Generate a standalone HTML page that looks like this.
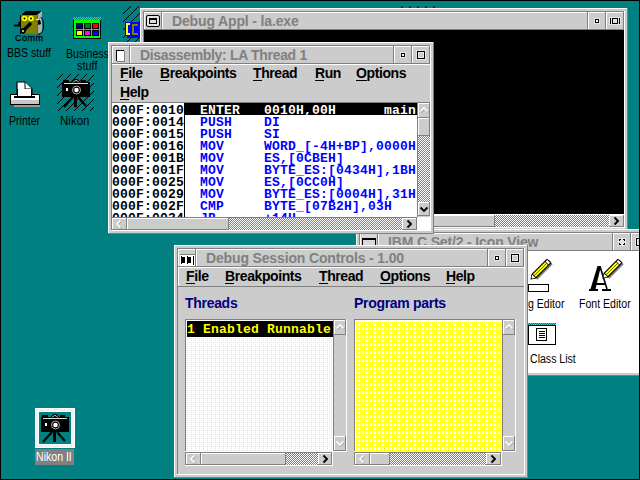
<!DOCTYPE html><html><head><meta charset="utf-8"><style>
html,body{margin:0;padding:0;width:640px;height:480px;overflow:hidden;background:#008080}
#s>div,#s>svg{position:absolute}
#s div div{position:absolute}
.t{white-space:pre;line-height:20px;height:20px}
svg{shape-rendering:crispEdges;display:block;overflow:hidden}
</style></head><body><div id="s" style="position:relative;width:640px;height:480px;overflow:hidden">
<svg width="0" height="0" style="position:absolute"><defs>
<pattern id="chk" width="2" height="2" patternUnits="userSpaceOnUse"><rect width="2" height="2" fill="#fff"/><rect x="1" y="0" width="1" height="1" fill="#808080"/><rect x="0" y="1" width="1" height="1" fill="#808080"/></pattern>
<pattern id="chkT" width="2" height="2" patternUnits="userSpaceOnUse"><rect width="2" height="2" fill="#008080"/><rect x="1" y="0" width="1" height="1" fill="#a0a0a0"/><rect x="0" y="1" width="1" height="1" fill="#a0a0a0"/></pattern>
<pattern id="chkY" width="2" height="2" patternUnits="userSpaceOnUse"><rect width="2" height="2" fill="#fff"/><rect x="1" y="0" width="1" height="1" fill="#ffff00"/><rect x="0" y="1" width="1" height="1" fill="#ffff00"/></pattern>
<pattern id="hat" width="8" height="8" patternUnits="userSpaceOnUse"><rect x="0" y="0" width="1" height="1" fill="#000"/><rect x="7" y="1" width="1" height="1" fill="#000"/><rect x="6" y="2" width="1" height="1" fill="#000"/><rect x="5" y="3" width="1" height="1" fill="#000"/><rect x="4" y="4" width="1" height="1" fill="#000"/><rect x="3" y="5" width="1" height="1" fill="#000"/><rect x="2" y="6" width="1" height="1" fill="#000"/><rect x="1" y="7" width="1" height="1" fill="#000"/></pattern>
<pattern id="ydith" width="8" height="8" patternUnits="userSpaceOnUse">
<rect x="0" y="0" width="1" height="1" fill="#ff0"/><rect x="4" y="0" width="1" height="1" fill="#ff0"/>
<rect x="0" y="2" width="1" height="1" fill="#ff0"/><rect x="2" y="2" width="1" height="1" fill="#ff0"/><rect x="4" y="2" width="1" height="1" fill="#ff0"/><rect x="6" y="2" width="1" height="1" fill="#ff0"/>
<rect x="0" y="4" width="1" height="1" fill="#ff0"/><rect x="2" y="4" width="1" height="1" fill="#ff0"/><rect x="4" y="4" width="1" height="1" fill="#ff0"/>
<rect x="0" y="6" width="1" height="1" fill="#ff0"/><rect x="2" y="6" width="1" height="1" fill="#ff0"/><rect x="4" y="6" width="1" height="1" fill="#ff0"/><rect x="6" y="6" width="1" height="1" fill="#ff0"/>
</pattern>
<pattern id="ydith2" patternTransform="translate(7,0)" width="8" height="8" patternUnits="userSpaceOnUse">
<rect x="0" y="0" width="1" height="1" fill="#ff0"/><rect x="4" y="0" width="1" height="1" fill="#ff0"/>
<rect x="0" y="2" width="1" height="1" fill="#ff0"/><rect x="2" y="2" width="1" height="1" fill="#ff0"/><rect x="4" y="2" width="1" height="1" fill="#ff0"/><rect x="6" y="2" width="1" height="1" fill="#ff0"/>
<rect x="0" y="4" width="1" height="1" fill="#ff0"/><rect x="2" y="4" width="1" height="1" fill="#ff0"/><rect x="4" y="4" width="1" height="1" fill="#ff0"/>
<rect x="0" y="6" width="1" height="1" fill="#ff0"/><rect x="2" y="6" width="1" height="1" fill="#ff0"/><rect x="4" y="6" width="1" height="1" fill="#ff0"/><rect x="6" y="6" width="1" height="1" fill="#ff0"/>
</pattern></defs></svg>
<div style="left:0;top:0;width:640px;height:480px;background:#008080"></div>
<svg style="left:10px;top:8px;" width="40" height="30" viewBox="10 8 40 30"><path d="M21 15 L26 11 L42 11 L37 15 Z" fill="#000"/><rect x="21" y="15" width="16" height="19" fill="#808000"/><rect x="20" y="15" width="1" height="19" fill="#000"/><path d="M37 15 L42 11 L42 32 L37 34 Z" fill="#b0b0b0" shape-rendering="auto"/><path d="M37 14.5 L37 34.5" stroke="#606060" stroke-width="1"/><circle cx="24.5" cy="18.5" r="2.8" fill="#ff0" shape-rendering="auto"/><circle cx="24.5" cy="18.5" r="1" fill="#000" shape-rendering="auto"/><circle cx="31" cy="18.5" r="2.8" fill="#ff0" shape-rendering="auto"/><circle cx="31" cy="18.5" r="1" fill="#000" shape-rendering="auto"/><rect x="36" y="19" width="5" height="1" fill="#ff0"/><path d="M23 31 L30 24" stroke="#000" stroke-width="3.6" stroke-linecap="round" shape-rendering="auto"/><circle cx="23" cy="31" r="2.8" fill="#000" shape-rendering="auto"/><rect x="22" y="30" width="2" height="2" fill="#b0b0b0"/><path d="M14 25.5 L19 25.5 L19.5 22.5 L21 22.5" fill="none" stroke="#000" stroke-width="1.8" shape-rendering="auto"/><path d="M38 21 L40 19 L41 24 L38 25 Z" fill="#000" shape-rendering="auto"/><path d="M41 17 Q44 20 43.5 27 Q43 34 38 34.5" fill="none" stroke="#000" stroke-width="1" shape-rendering="auto"/></svg>
<div class="t" style="left:15px;top:28px;font:9px 'Liberation Sans';line-height:20px;color:#000000;letter-spacing:0.5px;-webkit-text-stroke:0.25px #000">Comm</div>
<div class="t" style="left:7px;top:43px;font:12px 'Liberation Sans';line-height:20px;color:#000000;transform:scaleX(0.88);transform-origin:0 0">BBS stuff</div>
<svg style="left:70px;top:14px;" width="34" height="28" viewBox="70 14 34 28"><rect x="73" y="17" width="28" height="3" fill="url(#chkT)"/><rect x="73" y="20" width="28" height="19" fill="#000"/><rect x="74" y="20" width="26" height="18" fill="#00ff00"/><rect x="76" y="23" width="7" height="6" fill="#000"/><rect x="77" y="24" width="5" height="4" fill="#000080"/><rect x="84" y="23" width="7" height="6" fill="#000"/><rect x="85" y="24" width="5" height="4" fill="#008000"/><rect x="92" y="23" width="7" height="6" fill="#000"/><rect x="93" y="24" width="5" height="4" fill="#ff0000"/><rect x="76" y="30" width="7" height="6" fill="#000"/><rect x="77" y="31" width="5" height="4" fill="#ffff00"/><rect x="84" y="30" width="7" height="6" fill="#000"/><rect x="85" y="31" width="5" height="4" fill="#ff00ff"/><rect x="92" y="30" width="7" height="6" fill="#000"/><rect x="93" y="31" width="5" height="4" fill="#0000ff"/></svg>
<div class="t" style="left:66px;top:44px;font:12px 'Liberation Sans';line-height:20px;color:#000000;transform:scaleX(0.88);transform-origin:0 0">Business</div>
<div class="t" style="left:77px;top:56px;font:12px 'Liberation Sans';line-height:20px;color:#000000;transform:scaleX(0.91);transform-origin:0 0">stuff</div>
<svg style="left:118px;top:2px;" width="24" height="42" viewBox="118 2 24 42"><rect x="123" y="6" width="19" height="36" fill="url(#hat)"/><rect x="125" y="22" width="16" height="16" fill="#0000ff"/><rect x="125" y="36" width="2" height="2" fill="#008080"/><path d="M130 24 L127 24 L127 34 L130 34" fill="none" stroke="#ff0" stroke-width="2"/><path d="M138 25 L133 25 L133 34 L138 34" fill="none" stroke="#808000" stroke-width="2"/><rect x="139" y="27" width="1" height="1" fill="#f00"/><rect x="139" y="31" width="1" height="1" fill="#f00"/></svg>
<svg style="left:399px;top:6px;" width="37" height="2" viewBox="399 6 37 2"><rect x="399" y="6" width="37" height="2" fill="url(#hat)"/></svg>
<svg style="left:6px;top:78px;" width="40" height="32" viewBox="6 78 40 32"><path d="M17 82 L25 82 L32 89 L32 97 L17 97 Z" fill="#fff" stroke="#000" stroke-width="1.2" shape-rendering="auto"/><path d="M25 82 L25 89 L32 89" fill="#fff" stroke="#000" stroke-width="1" shape-rendering="auto"/><rect x="14" y="104" width="26" height="3" fill="#a09898"/><rect x="10" y="94" width="30" height="11" fill="#000"/><rect x="11" y="95" width="28" height="9" fill="#fff"/><rect x="11" y="100" width="28" height="4" fill="#c8c8c8"/><rect x="14" y="96" width="21" height="2" fill="#000"/><rect x="17" y="89" width="15" height="7" fill="#fff"/><rect x="17" y="89" width="1" height="7" fill="#000"/><rect x="31" y="89" width="1" height="7" fill="#000"/></svg>
<div class="t" style="left:9px;top:111px;font:12px 'Liberation Sans';line-height:20px;color:#000000;transform:scaleX(0.88);transform-origin:0 0">Printer</div>
<svg style="left:54px;top:70px;" width="44" height="44" viewBox="54 70 44 44"><rect x="57" y="74" width="37" height="37" fill="url(#hat)"/><rect x="62" y="82" width="28" height="15" fill="#000"/><rect x="63" y="80" width="6" height="2" fill="#000"/><rect x="81" y="80" width="5" height="2" fill="#000"/><path d="M72 82 L74 79 L78 79 L80 82 Z" fill="#000"/><path d="M73 82.5 Q76 78.5 79 82.5" fill="none" stroke="#fff" stroke-width="0.8" shape-rendering="auto"/><rect x="64" y="83" width="24" height="1" fill="#ddd"/><rect x="66" y="88" width="2" height="3" fill="#fff"/><circle cx="76.5" cy="90" r="4" fill="#000" stroke="#aaa" stroke-width="1" shape-rendering="auto"/><circle cx="76.5" cy="90" r="2.3" fill="#fff" shape-rendering="auto"/><rect x="74" y="97" width="3" height="10" fill="#000"/><path d="M73 97 L64 107" stroke="#000" stroke-width="2.2" shape-rendering="auto"/><path d="M78 97 L86 106" stroke="#000" stroke-width="2.2" shape-rendering="auto"/></svg>
<div class="t" style="left:60px;top:111px;font:12px 'Liberation Sans';line-height:20px;color:#000000;transform:scaleX(0.96);transform-origin:0 0">Nikon</div>
<svg style="left:34px;top:404px;" width="44" height="46" viewBox="34 404 44 46"><rect x="35" y="408" width="40" height="40" fill="#fff"/><rect x="36" y="409" width="38" height="38" fill="url(#chkY)"/><rect x="38" y="411" width="34" height="34" fill="#fff"/><rect x="39" y="412" width="32" height="32" fill="#008080"/><rect x="41" y="417" width="28" height="15" fill="#000"/><rect x="42" y="415" width="6" height="2" fill="#000"/><rect x="60" y="415" width="5" height="2" fill="#000"/><path d="M51 417 L53 414 L57 414 L59 417 Z" fill="#000"/><path d="M52 417.5 Q55 413.5 58 417.5" fill="none" stroke="#fff" stroke-width="0.8" shape-rendering="auto"/><rect x="43" y="418" width="24" height="1" fill="#ddd"/><rect x="45" y="423" width="2" height="3" fill="#fff"/><circle cx="55.5" cy="425" r="4" fill="#000" stroke="#aaa" stroke-width="1" shape-rendering="auto"/><circle cx="55.5" cy="425" r="2.3" fill="#fff" shape-rendering="auto"/><rect x="53" y="432" width="3" height="10" fill="#000"/><path d="M52 432 L43 442" stroke="#000" stroke-width="2.2" shape-rendering="auto"/><path d="M57 432 L65 441" stroke="#000" stroke-width="2.2" shape-rendering="auto"/></svg>
<div style="left:35px;top:449px;width:39px;height:16px;background:#808080;"></div>
<div class="t" style="left:36px;top:447px;font:12px 'Liberation Sans';line-height:20px;color:#ffffff;transform:scaleX(0.88);transform-origin:0 0">Nikon II</div>
<div style="left:140px;top:8px;width:488px;height:223px;background:#cccccc;"></div>
<div style="left:140px;top:8px;width:488px;height:1px;background:#ffffff;"></div>
<div style="left:140px;top:8px;width:1px;height:223px;background:#ffffff;"></div>
<div style="left:140px;top:230px;width:488px;height:1px;background:#808080;"></div>
<div style="left:627px;top:8px;width:1px;height:223px;background:#808080;"></div>
<div style="left:143px;top:11px;width:482px;height:1px;background:#808080;"></div>
<div style="left:143px;top:11px;width:1px;height:217px;background:#808080;"></div>
<div style="left:143px;top:227px;width:482px;height:1px;background:#ffffff;"></div>
<div style="left:624px;top:11px;width:1px;height:217px;background:#ffffff;"></div>
<div style="left:144px;top:12px;width:18px;height:1px;background:#ffffff;"></div>
<div style="left:144px;top:12px;width:1px;height:18px;background:#ffffff;"></div>
<div style="left:144px;top:29px;width:18px;height:1px;background:#808080;"></div>
<div style="left:161px;top:12px;width:1px;height:18px;background:#808080;"></div>
<div style="left:606px;top:12px;width:18px;height:1px;background:#ffffff;"></div>
<div style="left:606px;top:12px;width:1px;height:18px;background:#ffffff;"></div>
<div style="left:606px;top:29px;width:18px;height:1px;background:#808080;"></div>
<div style="left:623px;top:12px;width:1px;height:18px;background:#808080;"></div>
<div style="left:588px;top:12px;width:18px;height:1px;background:#ffffff;"></div>
<div style="left:588px;top:12px;width:1px;height:18px;background:#ffffff;"></div>
<div style="left:588px;top:29px;width:18px;height:1px;background:#808080;"></div>
<div style="left:605px;top:12px;width:1px;height:18px;background:#808080;"></div>
<div style="left:162px;top:12px;width:426px;height:1px;background:#ffffff;"></div>
<div style="left:162px;top:12px;width:1px;height:18px;background:#ffffff;"></div>
<div style="left:162px;top:29px;width:426px;height:1px;background:#808080;"></div>
<div style="left:587px;top:12px;width:1px;height:18px;background:#808080;"></div>
<div class="t" style="left:172px;top:11px;font:bold 14px 'Liberation Sans';line-height:20px;color:#808080;letter-spacing:-0.15px">Debug Appl - la.exe</div>
<div style="left:144px;top:30px;width:480px;height:184px;background:#000000;"></div>
<div style="left:144px;top:214px;width:480px;height:1px;background:#ffffff;"></div>
<div style="left:144px;top:215px;width:480px;height:12px;background:#cccccc;"></div>
<div style="left:144px;top:215px;width:351px;height:1px;background:#ffffff;"></div>
<div style="left:144px;top:215px;width:1px;height:12px;background:#ffffff;"></div>
<div style="left:144px;top:226px;width:351px;height:1px;background:#808080;"></div>
<div style="left:494px;top:215px;width:1px;height:12px;background:#808080;"></div>
<svg style="left:495px;top:215px;" width="114" height="12" viewBox="495 215 114 12"><rect x="495" y="215" width="114" height="12" fill="url(#chk)"/></svg>
<div style="left:609px;top:215px;width:15px;height:1px;background:#ffffff;"></div>
<div style="left:609px;top:215px;width:1px;height:12px;background:#ffffff;"></div>
<div style="left:609px;top:226px;width:15px;height:1px;background:#808080;"></div>
<div style="left:623px;top:215px;width:1px;height:12px;background:#808080;"></div>
<svg style="left:609px;top:214px;" width="14" height="14" viewBox="609 214 14 14"><polyline points="614.5,217.5 618,221 614.5,224.5" fill="none" stroke="#000000" stroke-width="1.9" shape-rendering="auto"/></svg>
<div style="left:144px;top:227px;width:480px;height:1px;background:#ffffff;"></div>
<div style="left:624px;top:12px;width:1px;height:216px;background:#ffffff;"></div>
<svg style="left:144px;top:12px;" width="18" height="18" viewBox="144 12 18 18"><rect x="146.5" y="15.5" width="13" height="11" rx="1.5" fill="#e4e4e4" stroke="#000" stroke-width="1" shape-rendering="auto"/><rect x="149" y="18" width="8" height="6" fill="#000"/><rect x="150" y="20" width="6" height="3" fill="#ddd"/></svg>
<div style="left:594px;top:18px;width:6px;height:6px;background:#e6e6e6;"></div>
<div style="left:595px;top:19px;width:4px;height:4px;background:#000000;"></div>
<div style="left:596px;top:20px;width:2px;height:2px;background:#ffffff;"></div>
<div style="left:609px;top:17px;width:12px;height:8px;background:#e6e6e6;"></div>
<div style="left:610px;top:18px;width:1px;height:6px;background:#000000;"></div>
<div style="left:619px;top:18px;width:1px;height:6px;background:#000000;"></div>
<div style="left:612px;top:18px;width:6px;height:6px;background:#000000;"></div>
<div style="left:613px;top:19px;width:4px;height:4px;background:#e0e0e0;"></div>
<div style="left:356px;top:229px;width:297px;height:147px;background:#cccccc;"></div>
<div style="left:356px;top:229px;width:297px;height:1px;background:#ffffff;"></div>
<div style="left:356px;top:229px;width:1px;height:147px;background:#ffffff;"></div>
<div style="left:356px;top:375px;width:297px;height:1px;background:#808080;"></div>
<div style="left:652px;top:229px;width:1px;height:147px;background:#808080;"></div>
<div style="left:359px;top:232px;width:291px;height:1px;background:#808080;"></div>
<div style="left:359px;top:232px;width:1px;height:141px;background:#808080;"></div>
<div style="left:359px;top:372px;width:291px;height:1px;background:#ffffff;"></div>
<div style="left:649px;top:232px;width:1px;height:141px;background:#ffffff;"></div>
<div style="left:360px;top:233px;width:18px;height:1px;background:#ffffff;"></div>
<div style="left:360px;top:233px;width:1px;height:18px;background:#ffffff;"></div>
<div style="left:360px;top:250px;width:18px;height:1px;background:#808080;"></div>
<div style="left:377px;top:233px;width:1px;height:18px;background:#808080;"></div>
<div style="left:631px;top:233px;width:18px;height:1px;background:#ffffff;"></div>
<div style="left:631px;top:233px;width:1px;height:18px;background:#ffffff;"></div>
<div style="left:631px;top:250px;width:18px;height:1px;background:#808080;"></div>
<div style="left:648px;top:233px;width:1px;height:18px;background:#808080;"></div>
<div style="left:613px;top:233px;width:18px;height:1px;background:#ffffff;"></div>
<div style="left:613px;top:233px;width:1px;height:18px;background:#ffffff;"></div>
<div style="left:613px;top:250px;width:18px;height:1px;background:#808080;"></div>
<div style="left:630px;top:233px;width:1px;height:18px;background:#808080;"></div>
<div style="left:378px;top:233px;width:235px;height:1px;background:#ffffff;"></div>
<div style="left:378px;top:233px;width:1px;height:18px;background:#ffffff;"></div>
<div style="left:378px;top:250px;width:235px;height:1px;background:#808080;"></div>
<div style="left:612px;top:233px;width:1px;height:18px;background:#808080;"></div>
<div class="t" style="left:388px;top:232px;font:bold 14px 'Liberation Sans';line-height:20px;color:#808080;letter-spacing:-0.15px">IBM C Set/2 - Icon View</div>
<div style="left:360px;top:251px;width:289px;height:121px;background:#ffffff;"></div>
<div style="left:618px;top:238px;width:8px;height:8px;background:#e6e6e6;"></div>
<div style="left:619px;top:239px;width:1px;height:1px;background:#000000;"></div>
<div style="left:620px;top:239px;width:1px;height:1px;background:#000000;"></div>
<div style="left:619px;top:240px;width:1px;height:1px;background:#000000;"></div>
<div style="left:623px;top:239px;width:1px;height:1px;background:#000000;"></div>
<div style="left:624px;top:239px;width:1px;height:1px;background:#000000;"></div>
<div style="left:624px;top:240px;width:1px;height:1px;background:#000000;"></div>
<div style="left:619px;top:243px;width:1px;height:1px;background:#000000;"></div>
<div style="left:619px;top:244px;width:1px;height:1px;background:#000000;"></div>
<div style="left:620px;top:244px;width:1px;height:1px;background:#000000;"></div>
<div style="left:624px;top:243px;width:1px;height:1px;background:#000000;"></div>
<div style="left:623px;top:244px;width:1px;height:1px;background:#000000;"></div>
<div style="left:624px;top:244px;width:1px;height:1px;background:#000000;"></div>
<div style="left:362px;top:234px;width:14px;height:11px;background:#d8d8d8;"></div>
<div style="left:362px;top:238px;width:14px;height:2px;background:#000000;"></div>
<div style="left:362px;top:240px;width:1px;height:5px;background:#000000;"></div>
<div style="left:375px;top:240px;width:1px;height:5px;background:#000000;"></div>
<div style="left:635px;top:237px;width:10px;height:10px;background:#e6e6e6;"></div>
<div style="left:636px;top:238px;width:8px;height:8px;background:#000000;"></div>
<div style="left:637px;top:239px;width:6px;height:6px;background:#e6e6e6;"></div>
<div style="left:638px;top:240px;width:4px;height:4px;background:#cccccc;"></div>
<svg style="left:526px;top:256px;" width="40" height="40" viewBox="526 256 40 40"><polygon points="536.52,278.86 551.69,263.69 549.71,260.29 533.83,276.17" fill="#808080" transform="translate(0.8,0.8)" shape-rendering="auto"/><polygon points="530.43,279.57 531.57,273.91 546.74,258.74 549.57,260.43 551.26,263.26 536.09,278.43" fill="#000" shape-rendering="auto"/><polygon points="531.49,277.66 532.34,274.69 535.31,277.66 532.34,278.51" fill="#fff" shape-rendering="auto"/><polygon points="532.98,274.19 545.11,262.06 547.94,264.89 535.81,277.02" fill="#ff0" shape-rendering="auto"/><line x1="534.39" y1="275.61" x2="546.53" y2="263.47" stroke="#000" stroke-width="0.6" shape-rendering="auto"/><polygon points="545.61,261.57 547.23,259.94 550.06,262.77 548.43,264.39" fill="#fff" shape-rendering="auto"/><rect x="528.5" y="284.5" width="20" height="7" fill="#fff" stroke="#000" stroke-width="1"/></svg>
<div class="t" style="left:528px;top:294px;font:12px 'Liberation Sans';line-height:20px;color:#000000;transform:scaleX(0.88);transform-origin:0 0">g Editor</div>
<svg style="left:584px;top:256px;" width="40" height="40" viewBox="584 256 40 40"><polygon points="597.5,266 601,266 595.5,289 590.5,289" fill="#000" shape-rendering="auto"/><line x1="600" y1="266.5" x2="607" y2="289" stroke="#000" stroke-width="1.6" shape-rendering="auto"/><rect x="594" y="283" width="11" height="1.6" fill="#000"/><rect x="589" y="289" width="9" height="2" fill="#000"/><rect x="602" y="289" width="9" height="2" fill="#000"/><polygon points="608.52,277.86 622.69,263.69 620.71,260.29 605.83,275.17" fill="#808080" transform="translate(0.8,0.8)" shape-rendering="auto"/><polygon points="602.43,278.57 603.57,272.91 617.74,258.74 620.57,260.43 622.26,263.26 608.09,277.43" fill="#000" shape-rendering="auto"/><polygon points="603.49,276.66 604.34,273.69 607.31,276.66 604.34,277.51" fill="#fff" shape-rendering="auto"/><polygon points="604.98,273.19 616.11,262.06 618.94,264.89 607.81,276.02" fill="#ff0" shape-rendering="auto"/><line x1="606.39" y1="274.61" x2="617.53" y2="263.47" stroke="#000" stroke-width="0.6" shape-rendering="auto"/><polygon points="616.61,261.57 618.23,259.94 621.06,262.77 619.43,264.39" fill="#fff" shape-rendering="auto"/></svg>
<div class="t" style="left:579px;top:294px;font:12px 'Liberation Sans';line-height:20px;color:#000000;transform:scaleX(0.88);transform-origin:0 0">Font Editor</div>
<svg style="left:526px;top:320px;" width="32" height="28" viewBox="526 320 32 28"><rect x="528" y="323" width="28" height="2" fill="url(#chkT)"/><rect x="528.5" y="325.5" width="27" height="19" fill="#fff" stroke="#000" stroke-width="1"/><rect x="536.5" y="328.5" width="10" height="12" fill="#fff" stroke="#000" stroke-width="1"/><rect x="539" y="331" width="6" height="1" fill="#000"/><rect x="539" y="333" width="6" height="1" fill="#000"/><rect x="539" y="335" width="6" height="1" fill="#000"/><rect x="539" y="337" width="6" height="1" fill="#000"/></svg>
<div class="t" style="left:530px;top:349px;font:12px 'Liberation Sans';line-height:20px;color:#000000;transform:scaleX(0.88);transform-origin:0 0">Class List</div>
<div style="left:108px;top:42px;width:326px;height:192px;background:#cccccc;"></div>
<div style="left:108px;top:42px;width:326px;height:1px;background:#ffffff;"></div>
<div style="left:108px;top:42px;width:1px;height:192px;background:#ffffff;"></div>
<div style="left:108px;top:233px;width:326px;height:1px;background:#808080;"></div>
<div style="left:433px;top:42px;width:1px;height:192px;background:#808080;"></div>
<div style="left:111px;top:45px;width:320px;height:1px;background:#808080;"></div>
<div style="left:111px;top:45px;width:1px;height:186px;background:#808080;"></div>
<div style="left:111px;top:230px;width:320px;height:1px;background:#ffffff;"></div>
<div style="left:430px;top:45px;width:1px;height:186px;background:#ffffff;"></div>
<div style="left:112px;top:46px;width:18px;height:1px;background:#ffffff;"></div>
<div style="left:112px;top:46px;width:1px;height:18px;background:#ffffff;"></div>
<div style="left:112px;top:63px;width:18px;height:1px;background:#808080;"></div>
<div style="left:129px;top:46px;width:1px;height:18px;background:#808080;"></div>
<div style="left:412px;top:46px;width:18px;height:1px;background:#ffffff;"></div>
<div style="left:412px;top:46px;width:1px;height:18px;background:#ffffff;"></div>
<div style="left:412px;top:63px;width:18px;height:1px;background:#808080;"></div>
<div style="left:429px;top:46px;width:1px;height:18px;background:#808080;"></div>
<div style="left:394px;top:46px;width:18px;height:1px;background:#ffffff;"></div>
<div style="left:394px;top:46px;width:1px;height:18px;background:#ffffff;"></div>
<div style="left:394px;top:63px;width:18px;height:1px;background:#808080;"></div>
<div style="left:411px;top:46px;width:1px;height:18px;background:#808080;"></div>
<div style="left:130px;top:46px;width:264px;height:1px;background:#ffffff;"></div>
<div style="left:130px;top:46px;width:1px;height:18px;background:#ffffff;"></div>
<div style="left:130px;top:63px;width:264px;height:1px;background:#808080;"></div>
<div style="left:393px;top:46px;width:1px;height:18px;background:#808080;"></div>
<div class="t" style="left:140px;top:45px;font:bold 14px 'Liberation Sans';line-height:20px;color:#808080;letter-spacing:-0.32px">Disassembly: LA Thread 1</div>
<div style="left:116px;top:50px;width:8px;height:11px;background:#ffffff;"></div>
<div style="left:116px;top:50px;width:1px;height:11px;background:#000000;"></div>
<div style="left:116px;top:50px;width:8px;height:1px;background:#000000;"></div>
<div style="left:124px;top:51px;width:1px;height:11px;background:#808080;"></div>
<div style="left:117px;top:61px;width:8px;height:1px;background:#808080;"></div>
<div style="left:400px;top:52px;width:6px;height:6px;background:#e6e6e6;"></div>
<div style="left:401px;top:53px;width:4px;height:4px;background:#000000;"></div>
<div style="left:402px;top:54px;width:2px;height:2px;background:#ffffff;"></div>
<div style="left:416px;top:50px;width:10px;height:10px;background:#e6e6e6;"></div>
<div style="left:417px;top:51px;width:8px;height:8px;background:#000000;"></div>
<div style="left:418px;top:52px;width:6px;height:6px;background:#e6e6e6;"></div>
<div style="left:419px;top:53px;width:4px;height:4px;background:#cccccc;"></div>
<div style="left:112px;top:64px;width:318px;height:1px;background:#ffffff;"></div>
<div class="t" style="left:120px;top:63px;font:bold 14px 'Liberation Sans';line-height:20px;color:#000000;letter-spacing:-0.4px">File</div>
<div style="left:120px;top:80px;width:8px;height:1px;background:#000000;"></div>
<div class="t" style="left:160px;top:63px;font:bold 14px 'Liberation Sans';line-height:20px;color:#000000;letter-spacing:-0.4px">Breakpoints</div>
<div style="left:160px;top:80px;width:9px;height:1px;background:#000000;"></div>
<div class="t" style="left:253px;top:63px;font:bold 14px 'Liberation Sans';line-height:20px;color:#000000;letter-spacing:-0.4px">Thread</div>
<div style="left:253px;top:80px;width:9px;height:1px;background:#000000;"></div>
<div class="t" style="left:315px;top:63px;font:bold 14px 'Liberation Sans';line-height:20px;color:#000000;letter-spacing:-0.4px">Run</div>
<div style="left:315px;top:80px;width:9px;height:1px;background:#000000;"></div>
<div class="t" style="left:356px;top:63px;font:bold 14px 'Liberation Sans';line-height:20px;color:#000000;letter-spacing:-0.4px">Options</div>
<div style="left:356px;top:80px;width:11px;height:1px;background:#000000;"></div>
<div class="t" style="left:120px;top:82px;font:bold 14px 'Liberation Sans';line-height:20px;color:#000000;letter-spacing:-0.4px">Help</div>
<div style="left:120px;top:99px;width:9px;height:1px;background:#000000;"></div>
<div style="left:112px;top:102px;width:318px;height:1px;background:#808080;"></div>
<div style="left:112px;top:103px;width:305px;height:114px;background:#ffffff;"></div>
<div style="left:184px;top:103px;width:1px;height:114px;background:#000000;"></div>
<div style="left:185px;top:103px;width:232px;height:12px;background:#000000;"></div>
<div style="left:417px;top:103px;width:1px;height:114px;background:#808080;"></div>
<div style="left:112px;top:103px;width:305px;height:114px;overflow:hidden">
<div class="t" style="left:0px;top:-2px;font:bold 13px 'Liberation Mono';line-height:20px;color:#000000;letter-spacing:0.2px">000F:0010</div>
<div class="t" style="left:88px;top:-2px;font:bold 13px 'Liberation Mono';line-height:20px;color:#ffffff;letter-spacing:0.2px">ENTER</div>
<div class="t" style="left:152px;top:-2px;font:bold 13px 'Liberation Mono';line-height:20px;color:#ffffff;letter-spacing:0.2px">0010H,00H</div>
<div class="t" style="left:272px;top:-2px;font:bold 13px 'Liberation Mono';line-height:20px;color:#ffffff;letter-spacing:0.2px">main</div>
<div class="t" style="left:0px;top:10px;font:bold 13px 'Liberation Mono';line-height:20px;color:#000000;letter-spacing:0.2px">000F:0014</div>
<div class="t" style="left:88px;top:10px;font:bold 13px 'Liberation Mono';line-height:20px;color:#0000ff;letter-spacing:0.2px">PUSH</div>
<div class="t" style="left:152px;top:10px;font:bold 13px 'Liberation Mono';line-height:20px;color:#0000ff;letter-spacing:0.2px">DI</div>
<div class="t" style="left:0px;top:22px;font:bold 13px 'Liberation Mono';line-height:20px;color:#000000;letter-spacing:0.2px">000F:0015</div>
<div class="t" style="left:88px;top:22px;font:bold 13px 'Liberation Mono';line-height:20px;color:#0000ff;letter-spacing:0.2px">PUSH</div>
<div class="t" style="left:152px;top:22px;font:bold 13px 'Liberation Mono';line-height:20px;color:#0000ff;letter-spacing:0.2px">SI</div>
<div class="t" style="left:0px;top:34px;font:bold 13px 'Liberation Mono';line-height:20px;color:#000000;letter-spacing:0.2px">000F:0016</div>
<div class="t" style="left:88px;top:34px;font:bold 13px 'Liberation Mono';line-height:20px;color:#0000ff;letter-spacing:0.2px">MOV</div>
<div class="t" style="left:152px;top:34px;font:bold 13px 'Liberation Mono';line-height:20px;color:#0000ff;letter-spacing:0.2px">WORD_[-4H+BP],0000H</div>
<div class="t" style="left:0px;top:46px;font:bold 13px 'Liberation Mono';line-height:20px;color:#000000;letter-spacing:0.2px">000F:001B</div>
<div class="t" style="left:88px;top:46px;font:bold 13px 'Liberation Mono';line-height:20px;color:#0000ff;letter-spacing:0.2px">MOV</div>
<div class="t" style="left:152px;top:46px;font:bold 13px 'Liberation Mono';line-height:20px;color:#0000ff;letter-spacing:0.2px">ES,[0CBEH]</div>
<div class="t" style="left:0px;top:58px;font:bold 13px 'Liberation Mono';line-height:20px;color:#000000;letter-spacing:0.2px">000F:001F</div>
<div class="t" style="left:88px;top:58px;font:bold 13px 'Liberation Mono';line-height:20px;color:#0000ff;letter-spacing:0.2px">MOV</div>
<div class="t" style="left:152px;top:58px;font:bold 13px 'Liberation Mono';line-height:20px;color:#0000ff;letter-spacing:0.2px">BYTE_ES:[0434H],1BH</div>
<div class="t" style="left:0px;top:70px;font:bold 13px 'Liberation Mono';line-height:20px;color:#000000;letter-spacing:0.2px">000F:0025</div>
<div class="t" style="left:88px;top:70px;font:bold 13px 'Liberation Mono';line-height:20px;color:#0000ff;letter-spacing:0.2px">MOV</div>
<div class="t" style="left:152px;top:70px;font:bold 13px 'Liberation Mono';line-height:20px;color:#0000ff;letter-spacing:0.2px">ES,[0CC0H]</div>
<div class="t" style="left:0px;top:82px;font:bold 13px 'Liberation Mono';line-height:20px;color:#000000;letter-spacing:0.2px">000F:0029</div>
<div class="t" style="left:88px;top:82px;font:bold 13px 'Liberation Mono';line-height:20px;color:#0000ff;letter-spacing:0.2px">MOV</div>
<div class="t" style="left:152px;top:82px;font:bold 13px 'Liberation Mono';line-height:20px;color:#0000ff;letter-spacing:0.2px">BYTE_ES:[0004H],31H</div>
<div class="t" style="left:0px;top:94px;font:bold 13px 'Liberation Mono';line-height:20px;color:#000000;letter-spacing:0.2px">000F:002F</div>
<div class="t" style="left:88px;top:94px;font:bold 13px 'Liberation Mono';line-height:20px;color:#0000ff;letter-spacing:0.2px">CMP</div>
<div class="t" style="left:152px;top:94px;font:bold 13px 'Liberation Mono';line-height:20px;color:#0000ff;letter-spacing:0.2px">BYTE_[07B2H],03H</div>
<div class="t" style="left:0px;top:106px;font:bold 13px 'Liberation Mono';line-height:20px;color:#000000;letter-spacing:0.2px">000F:0034</div>
<div class="t" style="left:88px;top:106px;font:bold 13px 'Liberation Mono';line-height:20px;color:#0000ff;letter-spacing:0.2px">JB</div>
<div class="t" style="left:152px;top:106px;font:bold 13px 'Liberation Mono';line-height:20px;color:#0000ff;letter-spacing:0.2px">+14H</div>
</div>
<div style="left:418px;top:103px;width:12px;height:114px;background:#cccccc;"></div>
<svg style="left:418px;top:136px;" width="12" height="66" viewBox="418 136 12 66"><rect x="418" y="136" width="12" height="66" fill="url(#chk)"/></svg>
<div style="left:418px;top:103px;width:12px;height:1px;background:#ffffff;"></div>
<div style="left:418px;top:103px;width:1px;height:15px;background:#ffffff;"></div>
<div style="left:418px;top:117px;width:12px;height:1px;background:#808080;"></div>
<div style="left:429px;top:103px;width:1px;height:15px;background:#808080;"></div>
<svg style="left:417px;top:103px;" width="14" height="14" viewBox="417 103 14 14"><polyline points="421.2,112.2 424.7,108.7 428.2,112.2" fill="none" stroke="#999" stroke-width="1.5" shape-rendering="auto"/><polyline points="420.5,111.5 424,108 427.5,111.5" fill="none" stroke="#fff" stroke-width="1.7" shape-rendering="auto"/></svg>
<div style="left:418px;top:118px;width:12px;height:1px;background:#ffffff;"></div>
<div style="left:418px;top:118px;width:1px;height:18px;background:#ffffff;"></div>
<div style="left:418px;top:135px;width:12px;height:1px;background:#808080;"></div>
<div style="left:429px;top:118px;width:1px;height:18px;background:#808080;"></div>
<div style="left:418px;top:202px;width:12px;height:1px;background:#ffffff;"></div>
<div style="left:418px;top:202px;width:1px;height:14px;background:#ffffff;"></div>
<div style="left:418px;top:215px;width:12px;height:1px;background:#808080;"></div>
<div style="left:429px;top:202px;width:1px;height:14px;background:#808080;"></div>
<svg style="left:417px;top:202px;" width="14" height="14" viewBox="417 202 14 14"><polyline points="420.5,207.5 424,211 427.5,207.5" fill="none" stroke="#000000" stroke-width="1.9" shape-rendering="auto"/></svg>
<div style="left:112px;top:217px;width:306px;height:1px;background:#808080;"></div>
<div style="left:112px;top:218px;width:305px;height:12px;background:#cccccc;"></div>
<div style="left:112px;top:218px;width:15px;height:1px;background:#ffffff;"></div>
<div style="left:112px;top:218px;width:1px;height:12px;background:#ffffff;"></div>
<div style="left:112px;top:229px;width:15px;height:1px;background:#808080;"></div>
<div style="left:126px;top:218px;width:1px;height:12px;background:#808080;"></div>
<svg style="left:112px;top:217px;" width="14" height="14" viewBox="112 217 14 14"><polyline points="121.2,221.2 117.7,224.7 121.2,228.2" fill="none" stroke="#999" stroke-width="1.5" shape-rendering="auto"/><polyline points="120.5,220.5 117,224 120.5,227.5" fill="none" stroke="#fff" stroke-width="1.7" shape-rendering="auto"/></svg>
<div style="left:127px;top:218px;width:102px;height:1px;background:#ffffff;"></div>
<div style="left:127px;top:218px;width:1px;height:12px;background:#ffffff;"></div>
<div style="left:127px;top:229px;width:102px;height:1px;background:#808080;"></div>
<div style="left:228px;top:218px;width:1px;height:12px;background:#808080;"></div>
<svg style="left:229px;top:218px;" width="173" height="12" viewBox="229 218 173 12"><rect x="229" y="218" width="173" height="12" fill="url(#chk)"/></svg>
<div style="left:402px;top:218px;width:15px;height:1px;background:#ffffff;"></div>
<div style="left:402px;top:218px;width:1px;height:12px;background:#ffffff;"></div>
<div style="left:402px;top:229px;width:15px;height:1px;background:#808080;"></div>
<div style="left:416px;top:218px;width:1px;height:12px;background:#808080;"></div>
<svg style="left:402px;top:217px;" width="14" height="14" viewBox="402 217 14 14"><polyline points="407.5,220.5 411,224 407.5,227.5" fill="none" stroke="#000000" stroke-width="1.9" shape-rendering="auto"/></svg>
<div style="left:417px;top:217px;width:14px;height:14px;background:#ffffff;"></div>
<div style="left:174px;top:245px;width:354px;height:233px;background:#cccccc;"></div>
<div style="left:174px;top:245px;width:354px;height:1px;background:#ffffff;"></div>
<div style="left:174px;top:245px;width:1px;height:233px;background:#ffffff;"></div>
<div style="left:174px;top:477px;width:354px;height:1px;background:#808080;"></div>
<div style="left:527px;top:245px;width:1px;height:233px;background:#808080;"></div>
<div style="left:177px;top:248px;width:348px;height:1px;background:#808080;"></div>
<div style="left:177px;top:248px;width:1px;height:227px;background:#808080;"></div>
<div style="left:177px;top:474px;width:348px;height:1px;background:#ffffff;"></div>
<div style="left:524px;top:248px;width:1px;height:227px;background:#ffffff;"></div>
<div style="left:178px;top:249px;width:18px;height:1px;background:#ffffff;"></div>
<div style="left:178px;top:249px;width:1px;height:18px;background:#ffffff;"></div>
<div style="left:178px;top:266px;width:18px;height:1px;background:#808080;"></div>
<div style="left:195px;top:249px;width:1px;height:18px;background:#808080;"></div>
<div style="left:506px;top:249px;width:18px;height:1px;background:#ffffff;"></div>
<div style="left:506px;top:249px;width:1px;height:18px;background:#ffffff;"></div>
<div style="left:506px;top:266px;width:18px;height:1px;background:#808080;"></div>
<div style="left:523px;top:249px;width:1px;height:18px;background:#808080;"></div>
<div style="left:488px;top:249px;width:18px;height:1px;background:#ffffff;"></div>
<div style="left:488px;top:249px;width:1px;height:18px;background:#ffffff;"></div>
<div style="left:488px;top:266px;width:18px;height:1px;background:#808080;"></div>
<div style="left:505px;top:249px;width:1px;height:18px;background:#808080;"></div>
<div style="left:196px;top:249px;width:292px;height:1px;background:#ffffff;"></div>
<div style="left:196px;top:249px;width:1px;height:18px;background:#ffffff;"></div>
<div style="left:196px;top:266px;width:292px;height:1px;background:#808080;"></div>
<div style="left:487px;top:249px;width:1px;height:18px;background:#808080;"></div>
<div class="t" style="left:206px;top:248px;font:bold 14px 'Liberation Sans';line-height:20px;color:#808080;letter-spacing:-0.15px">Debug Session Controls - 1.00</div>
<div style="left:180px;top:254px;width:15px;height:1px;background:#808080;"></div>
<div style="left:180px;top:255px;width:15px;height:11px;background:#ffffff;"></div>
<div style="left:181px;top:257px;width:4px;height:6px;background:#000000;"></div>
<div style="left:181px;top:256px;width:1px;height:8px;background:#000000;"></div>
<div style="left:187px;top:257px;width:4px;height:6px;background:#000000;"></div>
<div style="left:187px;top:256px;width:1px;height:8px;background:#000000;"></div>
<div style="left:193px;top:256px;width:1px;height:9px;background:#000000;"></div>
<div style="left:494px;top:255px;width:6px;height:6px;background:#e6e6e6;"></div>
<div style="left:495px;top:256px;width:4px;height:4px;background:#000000;"></div>
<div style="left:496px;top:257px;width:2px;height:2px;background:#ffffff;"></div>
<div style="left:510px;top:253px;width:10px;height:10px;background:#e6e6e6;"></div>
<div style="left:511px;top:254px;width:8px;height:8px;background:#000000;"></div>
<div style="left:512px;top:255px;width:6px;height:6px;background:#e6e6e6;"></div>
<div style="left:513px;top:256px;width:4px;height:4px;background:#cccccc;"></div>
<div style="left:178px;top:267px;width:346px;height:1px;background:#ffffff;"></div>
<div style="left:178px;top:267px;width:1px;height:19px;background:#ffffff;"></div>
<div style="left:178px;top:286px;width:346px;height:1px;background:#808080;"></div>
<div class="t" style="left:186px;top:266px;font:bold 14px 'Liberation Sans';line-height:20px;color:#000000;letter-spacing:-0.4px">File</div>
<div style="left:186px;top:283px;width:9px;height:1px;background:#000000;"></div>
<div class="t" style="left:225px;top:266px;font:bold 14px 'Liberation Sans';line-height:20px;color:#000000;letter-spacing:-0.4px">Breakpoints</div>
<div style="left:225px;top:283px;width:9px;height:1px;background:#000000;"></div>
<div class="t" style="left:319px;top:266px;font:bold 14px 'Liberation Sans';line-height:20px;color:#000000;letter-spacing:-0.4px">Thread</div>
<div style="left:319px;top:283px;width:9px;height:1px;background:#000000;"></div>
<div class="t" style="left:380px;top:266px;font:bold 14px 'Liberation Sans';line-height:20px;color:#000000;letter-spacing:-0.4px">Options</div>
<div style="left:380px;top:283px;width:11px;height:1px;background:#000000;"></div>
<div class="t" style="left:446px;top:266px;font:bold 14px 'Liberation Sans';line-height:20px;color:#000000;letter-spacing:-0.4px">Help</div>
<div style="left:446px;top:283px;width:9px;height:1px;background:#000000;"></div>
<div class="t" style="left:185px;top:293px;font:bold 14px 'Liberation Sans';line-height:20px;color:#000080;letter-spacing:-0.3px">Threads</div>
<div class="t" style="left:354px;top:293px;font:bold 14px 'Liberation Sans';line-height:20px;color:#000080;letter-spacing:-0.3px">Program parts</div>
<div style="left:185px;top:319px;width:162px;height:1px;background:#808080;"></div>
<div style="left:185px;top:319px;width:1px;height:147px;background:#808080;"></div>
<div style="left:186px;top:320px;width:147px;height:131px;background:#ffffff;"></div>
<svg style="left:187px;top:321px;" width="146" height="130" viewBox="187 321 146 130"><rect x="187" y="321" width="146" height="130" fill="#ffffff"/><rect x="187" y="321" width="146" height="130" fill="url(#ydith2)"/></svg>
<div style="left:333px;top:320px;width:1px;height:132px;background:#808080;"></div>
<div style="left:334px;top:320px;width:12px;height:132px;background:#cccccc;"></div>
<div style="left:334px;top:320px;width:12px;height:1px;background:#ffffff;"></div>
<div style="left:334px;top:320px;width:1px;height:15px;background:#ffffff;"></div>
<div style="left:334px;top:334px;width:12px;height:1px;background:#808080;"></div>
<div style="left:345px;top:320px;width:1px;height:15px;background:#808080;"></div>
<svg style="left:333px;top:320px;" width="14" height="14" viewBox="333 320 14 14"><polyline points="337.2,329.2 340.7,325.7 344.2,329.2" fill="none" stroke="#999" stroke-width="1.5" shape-rendering="auto"/><polyline points="336.5,328.5 340,325 343.5,328.5" fill="none" stroke="#fff" stroke-width="1.7" shape-rendering="auto"/></svg>
<div style="left:334px;top:436px;width:12px;height:1px;background:#ffffff;"></div>
<div style="left:334px;top:436px;width:1px;height:15px;background:#ffffff;"></div>
<div style="left:334px;top:450px;width:12px;height:1px;background:#808080;"></div>
<div style="left:345px;top:436px;width:1px;height:15px;background:#808080;"></div>
<svg style="left:333px;top:436px;" width="14" height="14" viewBox="333 436 14 14"><polyline points="337.2,442.2 340.7,445.7 344.2,442.2" fill="none" stroke="#999" stroke-width="1.5" shape-rendering="auto"/><polyline points="336.5,441.5 340,445 343.5,441.5" fill="none" stroke="#fff" stroke-width="1.7" shape-rendering="auto"/></svg>
<div style="left:346px;top:319px;width:1px;height:133px;background:#ffffff;"></div>
<div style="left:185px;top:451px;width:162px;height:1px;background:#ffffff;"></div>
<div style="left:186px;top:452px;width:146px;height:13px;background:#cccccc;"></div>
<div style="left:185px;top:452px;width:147px;height:1px;background:#808080;"></div>
<div style="left:186px;top:453px;width:15px;height:1px;background:#ffffff;"></div>
<div style="left:186px;top:453px;width:1px;height:12px;background:#ffffff;"></div>
<div style="left:186px;top:464px;width:15px;height:1px;background:#808080;"></div>
<div style="left:200px;top:453px;width:1px;height:12px;background:#808080;"></div>
<svg style="left:186px;top:452px;" width="14" height="14" viewBox="186 452 14 14"><polyline points="195.2,456.2 191.7,459.7 195.2,463.2" fill="none" stroke="#999" stroke-width="1.5" shape-rendering="auto"/><polyline points="194.5,455.5 191,459 194.5,462.5" fill="none" stroke="#fff" stroke-width="1.7" shape-rendering="auto"/></svg>
<div style="left:201px;top:453px;width:85px;height:1px;background:#ffffff;"></div>
<div style="left:201px;top:453px;width:1px;height:12px;background:#ffffff;"></div>
<div style="left:201px;top:464px;width:85px;height:1px;background:#808080;"></div>
<div style="left:285px;top:453px;width:1px;height:12px;background:#808080;"></div>
<svg style="left:286px;top:453px;" width="32" height="12" viewBox="286 453 32 12"><rect x="286" y="453" width="32" height="12" fill="url(#chk)"/></svg>
<div style="left:318px;top:453px;width:14px;height:1px;background:#ffffff;"></div>
<div style="left:318px;top:453px;width:1px;height:12px;background:#ffffff;"></div>
<div style="left:318px;top:464px;width:14px;height:1px;background:#808080;"></div>
<div style="left:331px;top:453px;width:1px;height:12px;background:#808080;"></div>
<svg style="left:318px;top:452px;" width="14" height="14" viewBox="318 452 14 14"><polyline points="323.5,455.5 327,459 323.5,462.5" fill="none" stroke="#000000" stroke-width="1.9" shape-rendering="auto"/></svg>
<div style="left:332px;top:452px;width:1px;height:14px;background:#ffffff;"></div>
<div style="left:185px;top:465px;width:148px;height:1px;background:#ffffff;"></div>
<div style="left:354px;top:319px;width:162px;height:1px;background:#808080;"></div>
<div style="left:354px;top:319px;width:1px;height:147px;background:#808080;"></div>
<div style="left:355px;top:320px;width:147px;height:131px;background:#ffffff;"></div>
<svg style="left:356px;top:321px;" width="146" height="130" viewBox="356 321 146 130"><rect x="356" y="321" width="146" height="130" fill="#ffffff"/><rect x="356" y="321" width="146" height="130" fill="url(#ydith)"/></svg>
<div style="left:502px;top:320px;width:1px;height:132px;background:#808080;"></div>
<div style="left:503px;top:320px;width:12px;height:132px;background:#cccccc;"></div>
<div style="left:503px;top:320px;width:12px;height:1px;background:#ffffff;"></div>
<div style="left:503px;top:320px;width:1px;height:15px;background:#ffffff;"></div>
<div style="left:503px;top:334px;width:12px;height:1px;background:#808080;"></div>
<div style="left:514px;top:320px;width:1px;height:15px;background:#808080;"></div>
<svg style="left:502px;top:320px;" width="14" height="14" viewBox="502 320 14 14"><polyline points="506.2,329.2 509.7,325.7 513.2,329.2" fill="none" stroke="#999" stroke-width="1.5" shape-rendering="auto"/><polyline points="505.5,328.5 509,325 512.5,328.5" fill="none" stroke="#fff" stroke-width="1.7" shape-rendering="auto"/></svg>
<div style="left:503px;top:436px;width:12px;height:1px;background:#ffffff;"></div>
<div style="left:503px;top:436px;width:1px;height:15px;background:#ffffff;"></div>
<div style="left:503px;top:450px;width:12px;height:1px;background:#808080;"></div>
<div style="left:514px;top:436px;width:1px;height:15px;background:#808080;"></div>
<svg style="left:502px;top:436px;" width="14" height="14" viewBox="502 436 14 14"><polyline points="506.2,442.2 509.7,445.7 513.2,442.2" fill="none" stroke="#999" stroke-width="1.5" shape-rendering="auto"/><polyline points="505.5,441.5 509,445 512.5,441.5" fill="none" stroke="#fff" stroke-width="1.7" shape-rendering="auto"/></svg>
<div style="left:515px;top:319px;width:1px;height:133px;background:#ffffff;"></div>
<div style="left:354px;top:451px;width:162px;height:1px;background:#ffffff;"></div>
<div style="left:355px;top:452px;width:146px;height:13px;background:#cccccc;"></div>
<div style="left:354px;top:452px;width:147px;height:1px;background:#808080;"></div>
<div style="left:355px;top:453px;width:15px;height:1px;background:#ffffff;"></div>
<div style="left:355px;top:453px;width:1px;height:12px;background:#ffffff;"></div>
<div style="left:355px;top:464px;width:15px;height:1px;background:#808080;"></div>
<div style="left:369px;top:453px;width:1px;height:12px;background:#808080;"></div>
<svg style="left:355px;top:452px;" width="14" height="14" viewBox="355 452 14 14"><polyline points="364.2,456.2 360.7,459.7 364.2,463.2" fill="none" stroke="#999" stroke-width="1.5" shape-rendering="auto"/><polyline points="363.5,455.5 360,459 363.5,462.5" fill="none" stroke="#fff" stroke-width="1.7" shape-rendering="auto"/></svg>
<div style="left:370px;top:453px;width:20px;height:1px;background:#ffffff;"></div>
<div style="left:370px;top:453px;width:1px;height:12px;background:#ffffff;"></div>
<div style="left:370px;top:464px;width:20px;height:1px;background:#808080;"></div>
<div style="left:389px;top:453px;width:1px;height:12px;background:#808080;"></div>
<svg style="left:390px;top:453px;" width="96" height="12" viewBox="390 453 96 12"><rect x="390" y="453" width="96" height="12" fill="url(#chk)"/></svg>
<div style="left:486px;top:453px;width:15px;height:1px;background:#ffffff;"></div>
<div style="left:486px;top:453px;width:1px;height:12px;background:#ffffff;"></div>
<div style="left:486px;top:464px;width:15px;height:1px;background:#808080;"></div>
<div style="left:500px;top:453px;width:1px;height:12px;background:#808080;"></div>
<svg style="left:486px;top:452px;" width="14" height="14" viewBox="486 452 14 14"><polyline points="491.5,455.5 495,459 491.5,462.5" fill="none" stroke="#000000" stroke-width="1.9" shape-rendering="auto"/></svg>
<div style="left:501px;top:452px;width:1px;height:14px;background:#ffffff;"></div>
<div style="left:354px;top:465px;width:148px;height:1px;background:#ffffff;"></div>
<div style="left:187px;top:321px;width:146px;height:16px;background:#000000;"></div>
<div class="t" style="left:187px;top:320px;font:bold 13px 'Liberation Mono';line-height:20px;color:#ffff00;letter-spacing:0.2px">1 Enabled Runnable</div>
<div style="left:0;top:0;width:640px;height:480px;box-shadow:inset 0 0 0 1px #000"></div>
</div></body></html>
